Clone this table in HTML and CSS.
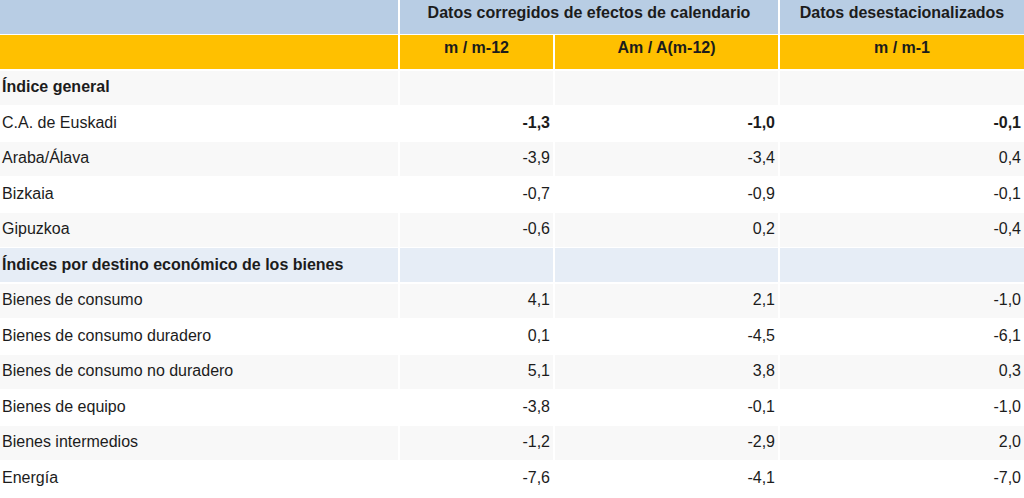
FILE: index.html
```html
<!DOCTYPE html>
<html lang="es">
<head>
<meta charset="utf-8">
<title>Índices</title>
<link rel="stylesheet" href="styles.css">
</head>
<body>
<table class="tbl">
  <thead>
    <tr class="h1">
      <th class="blank"></th>
      <th class="span2">Datos corregidos de efectos de calendario</th>
      <th>Datos desestacionalizados</th>
    </tr>
    <tr class="h2">
      <th class="blank"></th>
      <th>m / m-12</th>
      <th>Am / A(m-12)</th>
      <th>m / m-1</th>
    </tr>
  </thead>
  <tbody>
    <tr class="sec grey"><td class="lbl">Índice general</td><td></td><td></td><td></td></tr>
    <tr class="strong"><td class="lbl">C.A. de Euskadi</td><td>-1,3</td><td>-1,0</td><td>-0,1</td></tr>
    <tr class="grey"><td class="lbl">Araba/Álava</td><td>-3,9</td><td>-3,4</td><td>0,4</td></tr>
    <tr><td class="lbl">Bizkaia</td><td>-0,7</td><td>-0,9</td><td>-0,1</td></tr>
    <tr class="grey"><td class="lbl">Gipuzkoa</td><td>-0,6</td><td>0,2</td><td>-0,4</td></tr>
    <tr class="sec blue"><td class="lbl">Índices por destino económico de los bienes</td><td></td><td></td><td></td></tr>
    <tr class="grey"><td class="lbl">Bienes de consumo</td><td>4,1</td><td>2,1</td><td>-1,0</td></tr>
    <tr><td class="lbl">Bienes de consumo duradero</td><td>0,1</td><td>-4,5</td><td>-6,1</td></tr>
    <tr class="grey"><td class="lbl">Bienes de consumo no duradero</td><td>5,1</td><td>3,8</td><td>0,3</td></tr>
    <tr><td class="lbl">Bienes de equipo</td><td>-3,8</td><td>-0,1</td><td>-1,0</td></tr>
    <tr class="grey"><td class="lbl">Bienes intermedios</td><td>-1,2</td><td>-2,9</td><td>2,0</td></tr>
    <tr><td class="lbl">Energía</td><td>-7,6</td><td>-4,1</td><td>-7,0</td></tr>
  </tbody>
</table>
</body>
</html>
```

FILE: styles.css
```css
html, body {
  margin: 0;
  padding: 0;
  background: #ffffff;
}

body {
  font-family: "Liberation Sans", Arial, sans-serif;
  font-size: 16px;
  color: #1c1c1c;
}

.tbl {
  display: grid;
  grid-template-columns: 398px 153px 223px 1fr;
  grid-auto-rows: 33.9px;
  column-gap: 2px;
  row-gap: 1.6px;
  width: 1024px;
  border-collapse: separate;
}

.tbl thead,
.tbl tbody,
.tbl tr {
  display: contents;
}

.tbl th,
.tbl td {
  display: flex;
  padding: 0 3px;
  margin: 0;
  min-width: 0;
  white-space: nowrap;
}

.tbl th {
  font-weight: bold;
  justify-content: center;
  align-items: flex-start;
  padding-top: 4px;
}

.h1 th {
  background: #b8cde4;
}

.h2 th {
  background: #ffc000;
}

.span2 {
  grid-column: span 2;
}

.tbl td {
  align-items: center;
  justify-content: flex-end;
  padding-bottom: 1px;
}

.tbl td.lbl {
  justify-content: flex-start;
  padding-left: 2px;
}

.grey td {
  background: #f8f8f8;
}

.blue td {
  background: #e6edf6;
}

.sec td.lbl {
  font-weight: bold;
}

.strong td {
  font-weight: bold;
}

.strong td.lbl {
  font-weight: normal;
}
```
